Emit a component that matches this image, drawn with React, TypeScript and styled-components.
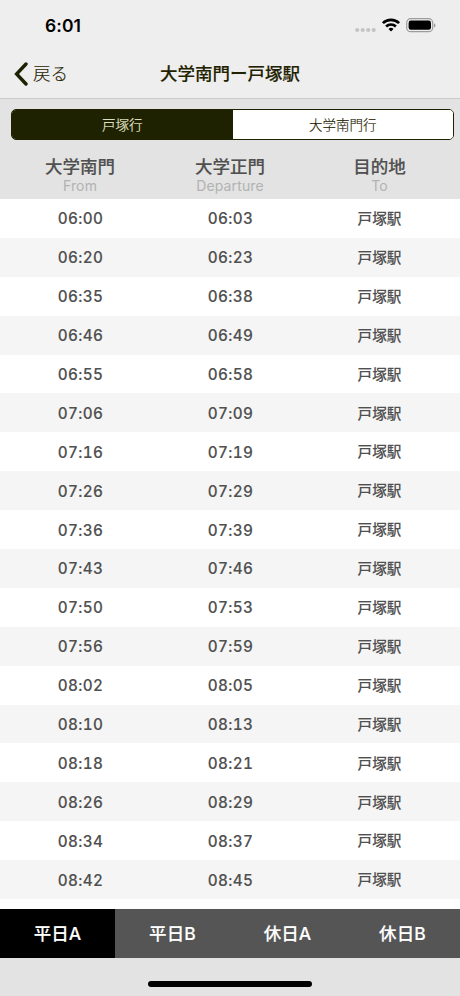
import React, { useState } from "react";
import styled, { createGlobalStyle } from "styled-components";

const OLIVE = "#1f2200";

const GlobalStyle = createGlobalStyle`
  * { box-sizing: border-box; }
  body { margin: 0; background: #fff; }
  button { font: inherit; border: 0; padding: 0; margin: 0; background: none; color: inherit; }
`;

const Screen = styled.div`
  display: flex;
  flex-direction: column;
  width: 460px;
  height: 996px;
  overflow: hidden;
  background: #fff;
  font-family: Inter, "Noto Sans CJK JP", sans-serif;
`;

const StatusBar = styled.header`
  display: flex;
  flex: none;
  align-items: center;
  justify-content: space-between;
  height: 50px;
  padding: 0 24px 0 45px;
  background: #eeeeee;
`;

const Clock = styled.span`
  font-size: 17.5px;
  font-weight: 600;
  line-height: 20px;
  padding-top: 2px;
  letter-spacing: 0.1px;
  color: #000;
`;

const StatusIcons = styled.svg`
  display: block;
  width: 82px;
  height: 20px;
`;

const NavBar = styled.nav`
  display: grid;
  flex: none;
  grid-template-columns: 1fr auto 1fr;
  align-items: center;
  height: 49px;
  padding: 0 14px;
  background: #eeeeee;
  border-bottom: 1px solid #c9c9c9;
  color: ${OLIVE};
`;

const BackButton = styled.button`
  display: flex;
  align-items: center;
  gap: 5px;
  justify-self: start;
  font-size: 17.5px;
  font-weight: 300;
  line-height: 24px;
  -webkit-text-stroke: 0.15px currentColor;
`;

const BackArrow = styled.svg`
  display: block;
  width: 14px;
  height: 24px;
`;

const Title = styled.h1`
  margin: 0;
  font-size: 17.5px;
  font-weight: 500;
  line-height: 24px;
  -webkit-text-stroke: 0.15px currentColor;
`;

const TableHead = styled.section`
  flex: none;
  height: 100px;
  padding-top: 10px;
  background: #e3e3e3;
`;

const Segmented = styled.div`
  display: flex;
  height: 31px;
  margin: 0 6px 0 11px;
  border: 1px solid ${OLIVE};
  border-radius: 5px;
  overflow: hidden;
`;

const Segment = styled.button<{ $active: boolean }>`
  flex: 1;
  font-size: 13.5px;
  font-weight: 300;
  line-height: 30px;
  -webkit-text-stroke: 0.15px currentColor;
  background: ${(p) => (p.$active ? OLIVE : "#fff")};
  color: ${(p) => (p.$active ? "#f4f5dc" : OLIVE)};
`;

const Columns = styled.div`
  display: grid;
  grid-template-columns: repeat(3, 1fr);
  align-items: center;
  padding: 0 5px;
  text-align: center;
`;

const HeadCell = styled.div`
  padding-top: 15px;
  color: #505050;
  &:last-child { padding-right: 1px; }
`;

const HeadName = styled.div`
  font-size: 17.5px;
  font-weight: 500;
  line-height: 24px;
  -webkit-text-stroke: 0.15px currentColor;
`;

const HeadNote = styled.div`
  font-size: 14px;
  line-height: 14px;
  letter-spacing: 0.15px;
  color: #b2b2b2;
`;

const Rows = styled.main`
  flex: 1;
  min-height: 0;
  overflow: hidden;
`;

const Row = styled(Columns)`
  height: 38.9px;
  background: #fff;
  color: #505050;
  &:nth-child(even) { background: #f5f5f5; }
`;

const Time = styled.span`
  padding: 1px 0 0 1px;
  font-size: 15.3px;
  font-weight: 500;
  font-variant-numeric: tabular-nums;
  letter-spacing: 0.35px;
  -webkit-text-stroke: 0.12px currentColor;
`;

const Place = styled.span`
  padding: 0 1px 1.6px 0;
  font-size: 14.6px;
  font-weight: 500;
  -webkit-text-stroke: 0.1px currentColor;
`;

const TabBar = styled.div`
  display: grid;
  flex: none;
  grid-template-columns: repeat(4, 1fr);
  height: 49px;
`;

const Tab = styled.button<{ $active: boolean }>`
  font-size: 17.5px;
  font-weight: 500;
  line-height: 49px;
  letter-spacing: 0.1px;
  -webkit-text-stroke: 0.12px currentColor;
  background: ${(p) => (p.$active ? "#000" : "#555")};
  color: #fff;
`;

const HomeArea = styled.footer`
  display: flex;
  flex: none;
  align-items: flex-start;
  justify-content: center;
  height: 38px;
  padding-top: 23px;
  background: #e3e3e3;
`;

const HomeBar = styled.div`
  width: 164px;
  height: 6px;
  border-radius: 3px;
  background: #000;
`;

const directions = ["戸塚行", "大学南門行"];
const headings = [
  ["大学南門", "From"],
  ["大学正門", "Departure"],
  ["目的地", "To"],
];
const times = [
  ["06:00", "06:03"],
  ["06:20", "06:23"],
  ["06:35", "06:38"],
  ["06:46", "06:49"],
  ["06:55", "06:58"],
  ["07:06", "07:09"],
  ["07:16", "07:19"],
  ["07:26", "07:29"],
  ["07:36", "07:39"],
  ["07:43", "07:46"],
  ["07:50", "07:53"],
  ["07:56", "07:59"],
  ["08:02", "08:05"],
  ["08:10", "08:13"],
  ["08:18", "08:21"],
  ["08:26", "08:29"],
  ["08:34", "08:37"],
  ["08:42", "08:45"],
];
const days = ["平日A", "平日B", "休日A", "休日B"];

export default function App() {
  const [direction, setDirection] = useState(0);
  const [day, setDay] = useState(0);

  return (
    <>
      <GlobalStyle />
      <Screen lang="ja">
        <StatusBar>
          <Clock>6:01</Clock>
          <StatusIcons viewBox="0 0 82 20">
            <g fill="#c4c4c4">
              <circle cx="3.2" cy="15" r="2.1" />
              <circle cx="8.7" cy="15" r="2.1" />
              <circle cx="14.2" cy="15" r="2.1" />
              <circle cx="19.7" cy="15" r="2.1" />
            </g>
            <g fill="none" stroke="#000" strokeWidth="2.7">
              <path d="M28.9 8.1a11.6 11.6 0 0 1 16.2 0" />
              <path d="M32.1 11.5a7 7 0 0 1 9.8 0" />
            </g>
            <path d="M37 16.6l-2.5-2.6a3.6 3.6 0 0 1 5 0z" fill="#000" />
            <rect x="52.7" y="3.7" width="26" height="13" rx="4" fill="none" stroke="#9c9c9c" strokeWidth="1.2" />
            <rect x="54.6" y="5.6" width="22.4" height="9.2" rx="2.3" fill="#000" />
            <path d="M80 8.2c2 .8 2 3.6 0 4.4z" fill="#9c9c9c" />
          </StatusIcons>
        </StatusBar>

        <NavBar>
          <BackButton>
            <BackArrow viewBox="0 0 14 24" fill="none" stroke={OLIVE} strokeWidth="3.4" strokeLinecap="round">
              <path d="M12 2L2.6 12 12 22" />
            </BackArrow>
            戻る
          </BackButton>
          <Title>大学南門ー戸塚駅</Title>
        </NavBar>

        <TableHead>
          <Segmented>
            {directions.map((name, i) => (
              <Segment key={name} $active={i === direction} onClick={() => setDirection(i)}>
                {name}
              </Segment>
            ))}
          </Segmented>
          <Columns>
            {headings.map(([name, note]) => (
              <HeadCell key={note}>
                <HeadName>{name}</HeadName>
                <HeadNote>{note}</HeadNote>
              </HeadCell>
            ))}
          </Columns>
        </TableHead>

        <Rows>
          {times.map(([from, departure]) => (
            <Row key={from}>
              <Time>{from}</Time>
              <Time>{departure}</Time>
              <Place>戸塚駅</Place>
            </Row>
          ))}
        </Rows>

        <TabBar>
          {days.map((name, i) => (
            <Tab key={name} $active={i === day} onClick={() => setDay(i)}>
              {name}
            </Tab>
          ))}
        </TabBar>
        <HomeArea>
          <HomeBar />
        </HomeArea>
      </Screen>
    </>
  );
}
